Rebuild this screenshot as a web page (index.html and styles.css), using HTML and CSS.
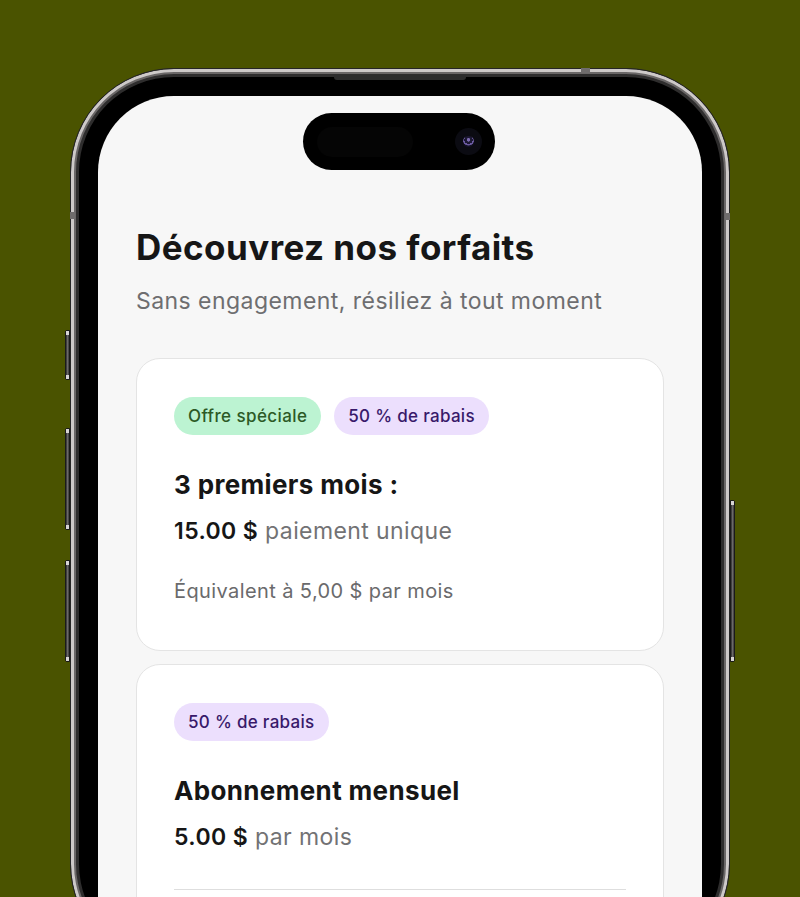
FILE: index.html
```html
<!DOCTYPE html>
<html lang="fr">
<head>
<meta charset="utf-8">
<title>Découvrez nos forfaits</title>
<link rel="stylesheet" href="styles.css">
</head>
<body>
<div class="stage">
  <div class="phone">
    <span class="btn btn-action"></span>
    <span class="btn btn-vol-up"></span>
    <span class="btn btn-vol-down"></span>
    <span class="btn btn-power"></span>
    <span class="antenna antenna-top"></span>
    <span class="antenna antenna-left"></span>
    <span class="antenna antenna-right"></span>
    <span class="speaker"></span>
    <div class="screen">
      <div class="island">
        <span class="grille"></span>
        <span class="camera"><span class="lens"></span></span>
      </div>
      <h1 class="title">Découvrez nos forfaits</h1>
      <p class="subtitle">Sans engagement, résiliez à tout moment</p>

      <div class="card">
        <div class="badges">
          <span class="badge badge-green">Offre spéciale</span>
          <span class="badge badge-purple">50 % de rabais</span>
        </div>
        <h2 class="plan">3 premiers mois :</h2>
        <p class="price"><strong>15.00 $</strong> paiement unique</p>
        <p class="note">Équivalent à 5,00 $ par mois</p>
      </div>

      <div class="card">
        <div class="badges">
          <span class="badge badge-purple">50 % de rabais</span>
        </div>
        <h2 class="plan">Abonnement mensuel</h2>
        <p class="price"><strong>5.00 $</strong> par mois</p>
        <hr class="divider">
      </div>
    </div>
  </div>
</div>
</body>
</html>
```
FILE: styles.css
```css
* { box-sizing: border-box; }
html, body { margin: 0; padding: 0; }
body {
  background: #4a5300;
  font-family: Inter, "Noto Sans", "Liberation Sans", sans-serif;
  overflow: hidden;
  height: 897px;
}
.stage {
  padding-top: 68px;
  display: flex;
  justify-content: center;
}
.phone {
  position: relative;
  width: 660px;
  height: 900px;
  border-radius: 104px;
  border: 1px solid #262626;
  background: #000;
  box-shadow: inset 0 0 0 3px #cdc9c8, inset 0 0 0 5px #6a6767, inset 0 0 0 8px #2e2d2d;
  padding: 27px;
}
.btn {
  position: absolute;
  width: 5px;
  background: linear-gradient(90deg, #2a2a2a, #6b6868 50%, #3a3939);
  border: 1px solid #1a1a1a;
}
.btn::before, .btn::after {
  content: "";
  position: absolute;
  left: 0; right: 0;
  height: 4px;
  background: #d8d4d3;
}
.btn::before { top: 0; }
.btn::after { bottom: 0; }
.btn-action { left: -6px; top: 261px; height: 50px; border-radius: 2px 0 0 2px; }
.btn-vol-up { left: -6px; top: 359px; height: 102px; border-radius: 2px 0 0 2px; }
.btn-vol-down { left: -6px; top: 491px; height: 102px; border-radius: 2px 0 0 2px; }
.btn-power { right: -6px; top: 431px; height: 162px; border-radius: 0 2px 2px 0; }
.antenna {
  position: absolute;
  background: #6f6c6c;
}
.antenna-top { top: -1px; left: 510px; width: 9px; height: 5px; }
.antenna-left { left: -1px; top: 143px; width: 5px; height: 7px; }
.antenna-right { right: -1px; top: 144px; width: 5px; height: 7px; }
.speaker {
  position: absolute;
  top: 6px;
  left: 263px;
  width: 132px;
  height: 5px;
  background: #2c2c2c;
  border-radius: 0 0 3px 3px;
}
.screen {
  position: relative;
  width: 604px;
  height: 100%;
  border-radius: 76px 76px 0 0;
  background: #f7f7f7;
  padding: 130px 38px 0;
  overflow: hidden;
}
.island {
  position: absolute;
  top: 17px;
  left: 205px;
  width: 192px;
  height: 57px;
  border-radius: 29px;
  background: #000;
}
.grille {
  position: absolute;
  left: 14px;
  top: 14px;
  width: 96px;
  height: 30px;
  border-radius: 15px;
  background: #050505;
}
.camera {
  position: absolute;
  left: 152px;
  top: 15px;
  width: 27px;
  height: 27px;
  border-radius: 50%;
  background: #0b0b12;
  display: flex;
  align-items: center;
  justify-content: center;
}
.lens {
  width: 11px;
  height: 11px;
  border-radius: 50%;
  background: radial-gradient(circle at 50% 35%, #7d6bb0 0 1.5px, #1c1833 2px, #1c1833 45%, #6b5aa0 0 60%, #141226 65%);
}
.title {
  margin: 0;
  font-size: 35px;
  line-height: 42px;
  font-weight: 700;
  color: #161616;
  letter-spacing: 0.45px;
}
.subtitle {
  margin: 18px 0 0;
  font-size: 23px;
  line-height: 30px;
  color: #6e6e70;
  letter-spacing: 0.45px;
}
.card {
  margin-top: 42px;
  background: #fff;
  border: 1px solid #e4e4e4;
  border-radius: 24px;
  padding: 38px 37px 46px;
}
.card + .card { margin-top: 13px; }
.badges {
  display: flex;
  gap: 13px;
}
.badge {
  height: 38px;
  padding: 0 14px;
  border-radius: 19px;
  display: inline-flex;
  align-items: center;
  font-size: 17px;
  font-weight: 500;
  letter-spacing: 0.3px;
}
.badge-green { background: #bcf3d2; color: #2c5a26; letter-spacing: 0.4px; }
.badge-purple { background: #ecdffd; color: #38196a; }
.plan {
  margin: 34px 0 0;
  font-size: 26px;
  line-height: 32px;
  font-weight: 700;
  color: #161616;
  letter-spacing: 0.35px;
}
.price {
  margin: 15px 0 0;
  font-size: 23px;
  line-height: 30px;
  color: #727274;
  letter-spacing: 0.4px;
}
.price strong {
  color: #161616;
  font-weight: 600;
}
.note {
  margin: 32px 0 0;
  font-size: 20px;
  line-height: 26px;
  color: #6a6a6c;
  letter-spacing: 0.4px;
}
.divider {
  margin: 37px 0 0;
  border: 0;
  border-top: 1px solid #dedede;
}
```
